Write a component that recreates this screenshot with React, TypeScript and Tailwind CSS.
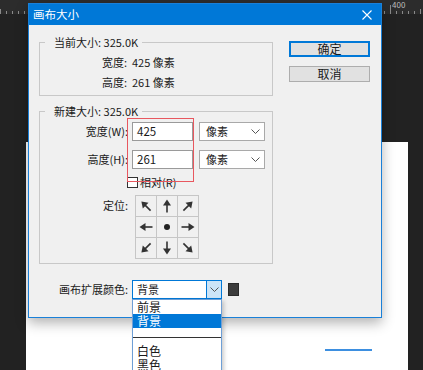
import React from 'react';

const ticks = Array.from({ length: 71 }, (_, i) => i);

function Chevron() {
    return (
        <svg width="9" height="5" viewBox="0 0 9 5">
            <polyline points="0.5,0.5 4.5,4.5 8.5,0.5" fill="none" stroke="#555" strokeWidth="1" />
        </svg>
    );
}

function Arrow({ deg }: { deg: number }) {
    return (
        <svg width="20" height="20" viewBox="0 0 20 20">
            <g transform={`rotate(${deg} 10 10)`}>
                <line x1="3.5" y1="10" x2="12" y2="10" stroke="#333" strokeWidth="1.6" />
                <polygon points="10.5,6 16.5,10 10.5,14" fill="#333" />
            </g>
        </svg>
    );
}

function UnitSelect() {
    return (
        <div className="ml-[6px] flex h-[19px] w-[66px] items-center justify-between border border-[#a9a9a9] bg-white pl-[6px] pr-[4px]">
            <span>像素</span>
            <Chevron />
        </div>
    );
}

export default function App() {
    // 3x3 anchor grid, clockwise from top-left
    const anchors: (number | null)[] = [225, 270, 315, 180, null, 0, 135, 90, 45];

    return (
        <div className="relative h-[370px] w-[423px] overflow-hidden bg-[#222222] font-['Noto_Sans_CJK_SC',sans-serif] text-[11px] text-[#1a1a1a]">
            {/* ruler */}
            <div className="absolute left-0 top-0 h-[14px] w-full bg-[#2c2c2c]">
                {ticks.map((i) => (
                    <span
                        key={i}
                        className="absolute bottom-0 w-px bg-[#8a8a8a]"
                        style={{ left: i * 6, height: i % 10 === 5 ? 9 : i % 5 === 0 ? 5 : 3 }}
                    />
                ))}
                <span className="absolute left-[392px] top-0 text-[8px] leading-[9px] text-[#bdbdbd]">400</span>
            </div>

            {/* document canvas */}
            <div className="absolute left-[26px] top-[142px] h-[228px] w-[382px] bg-white" />
            <div className="absolute left-[325px] top-[349px] h-[2px] w-[47px] bg-[#3d8fe0]" />

            {/* dialog */}
            <div className="absolute left-[28px] top-[3px] flex h-[315px] w-[354px] flex-col border border-[#1a80d8] bg-[#f0f0f0] shadow-[0_5px_12px_rgba(0,0,0,0.3)]">
                <div className="flex h-[21px] items-center justify-between bg-[#0078d7] pl-[4px] pr-[9px] text-[11.5px] text-white">
                    <span>画布大小</span>
                    <svg width="10" height="10" viewBox="0 0 10 10">
                        <path d="M0.5 0.5L9.5 9.5M9.5 0.5L0.5 9.5" stroke="white" strokeWidth="1.1" />
                    </svg>
                </div>

                <div className="flex pl-[10px] pt-[9px]">
                    <div className="flex w-[234px] flex-col">
                        <fieldset className="h-[62px] border border-[#c8c8c8]">
                            <legend className="ml-[5px] pl-[9px] pr-[4px] leading-[16px]">当前大小: 325.0K</legend>
                            <div className="mt-[2px] pl-[62px] leading-[20px]">
                                <div>宽度:&nbsp; 425 像素</div>
                                <div>高度:&nbsp; 261 像素</div>
                            </div>
                        </fieldset>

                        <fieldset className="mt-[7px] h-[161px] border border-[#c8c8c8]">
                            <legend className="ml-[5px] pl-[9px] pr-[4px] leading-[16px]">新建大小: 325.0K</legend>
                            <div className="mt-[3px] flex items-center">
                                <span className="w-[88px] text-right">宽度(W):</span>
                                <div className="ml-[4px] flex h-[19px] w-[61px] items-center border border-[#9a9a9a] bg-white pl-[4px] text-[11.5px]">425</div>
                                <UnitSelect />
                            </div>
                            <div className="mt-[9px] flex items-center">
                                <span className="w-[88px] text-right">高度(H):</span>
                                <div className="ml-[4px] flex h-[19px] w-[61px] items-center border border-[#9a9a9a] bg-white pl-[4px] text-[11.5px]">261</div>
                                <UnitSelect />
                            </div>
                            <div className="mt-[6px] flex h-[14px] items-center pl-[87px]">
                                <span className="h-[11px] w-[11px] border border-[#333] bg-white" />
                                <span className="ml-[2px] leading-[14px]">相对(R)</span>
                            </div>
                            <div className="mt-[6px] flex items-start">
                                <span className="w-[88px] pt-[2px] text-right">定位:</span>
                                <div className="ml-[7px] grid w-fit grid-cols-3 gap-px border border-[#c6c6c6] bg-[#c6c6c6]">
                                    {anchors.map((a, i) => (
                                        <div key={i} className="flex h-[20px] w-[20px] items-center justify-center bg-[#f0f0f0]">
                                            {a === null ? (
                                                <span className="h-[6px] w-[6px] rounded-full bg-[#222]" />
                                            ) : (
                                                <Arrow deg={a} />
                                            )}
                                        </div>
                                    ))}
                                </div>
                            </div>
                        </fieldset>

                        <div className="mt-[16px] flex items-center">
                            <span className="w-[89px] text-right">画布扩展颜色:</span>
                            <div className="relative ml-[4px] flex h-[19px] w-[90px] items-center border border-[#0078d7] bg-white">
                                <span className="flex-1 pl-[4px]">背景</span>
                                <div className="flex h-full w-[15px] items-center justify-center border-l border-[#0078d7] bg-[#cce4f7]">
                                    <Chevron />
                                </div>
                                {/* open list */}
                                <div className="absolute left-[-1px] top-[18px] w-[90px] border border-[#6e9fd6] bg-white text-[12px] leading-[14px] shadow-[2px_2px_4px_rgba(0,0,0,0.2)]">
                                    <div className="h-[14px] pl-[4px]">前景</div>
                                    <div className="h-[14px] bg-[#0078d7] pl-[4px] text-white">背景</div>
                                    <div className="flex h-[16px] flex-col justify-center">
                                        <div className="mt-[2px] h-px bg-[#333]" />
                                    </div>
                                    <div className="h-[14px] pl-[4px]">白色</div>
                                    <div className="h-[14px] pl-[4px]">黑色</div>
                                </div>
                            </div>
                            <span className="ml-[6px] h-[13px] w-[11px] border border-[#2a2a2a] bg-[#3c3c3c]" />
                        </div>
                    </div>

                    <div className="ml-[16px] mt-[7px] flex w-[81px] flex-col">
                        <button className="flex h-[16px] items-center justify-center border-2 border-[#0078d7] bg-[#e1e1e1] text-[12px] leading-none">确定</button>
                        <button className="mt-[9px] flex h-[16px] items-center justify-center border border-[#adadad] bg-[#e1e1e1] text-[12px] leading-none">取消</button>
                    </div>
                </div>
            </div>

            {/* red annotation box */}
            <div className="absolute left-[127px] top-[118px] h-[64px] w-[67px] border border-[#e8575f]" />
        </div>
    );
}
